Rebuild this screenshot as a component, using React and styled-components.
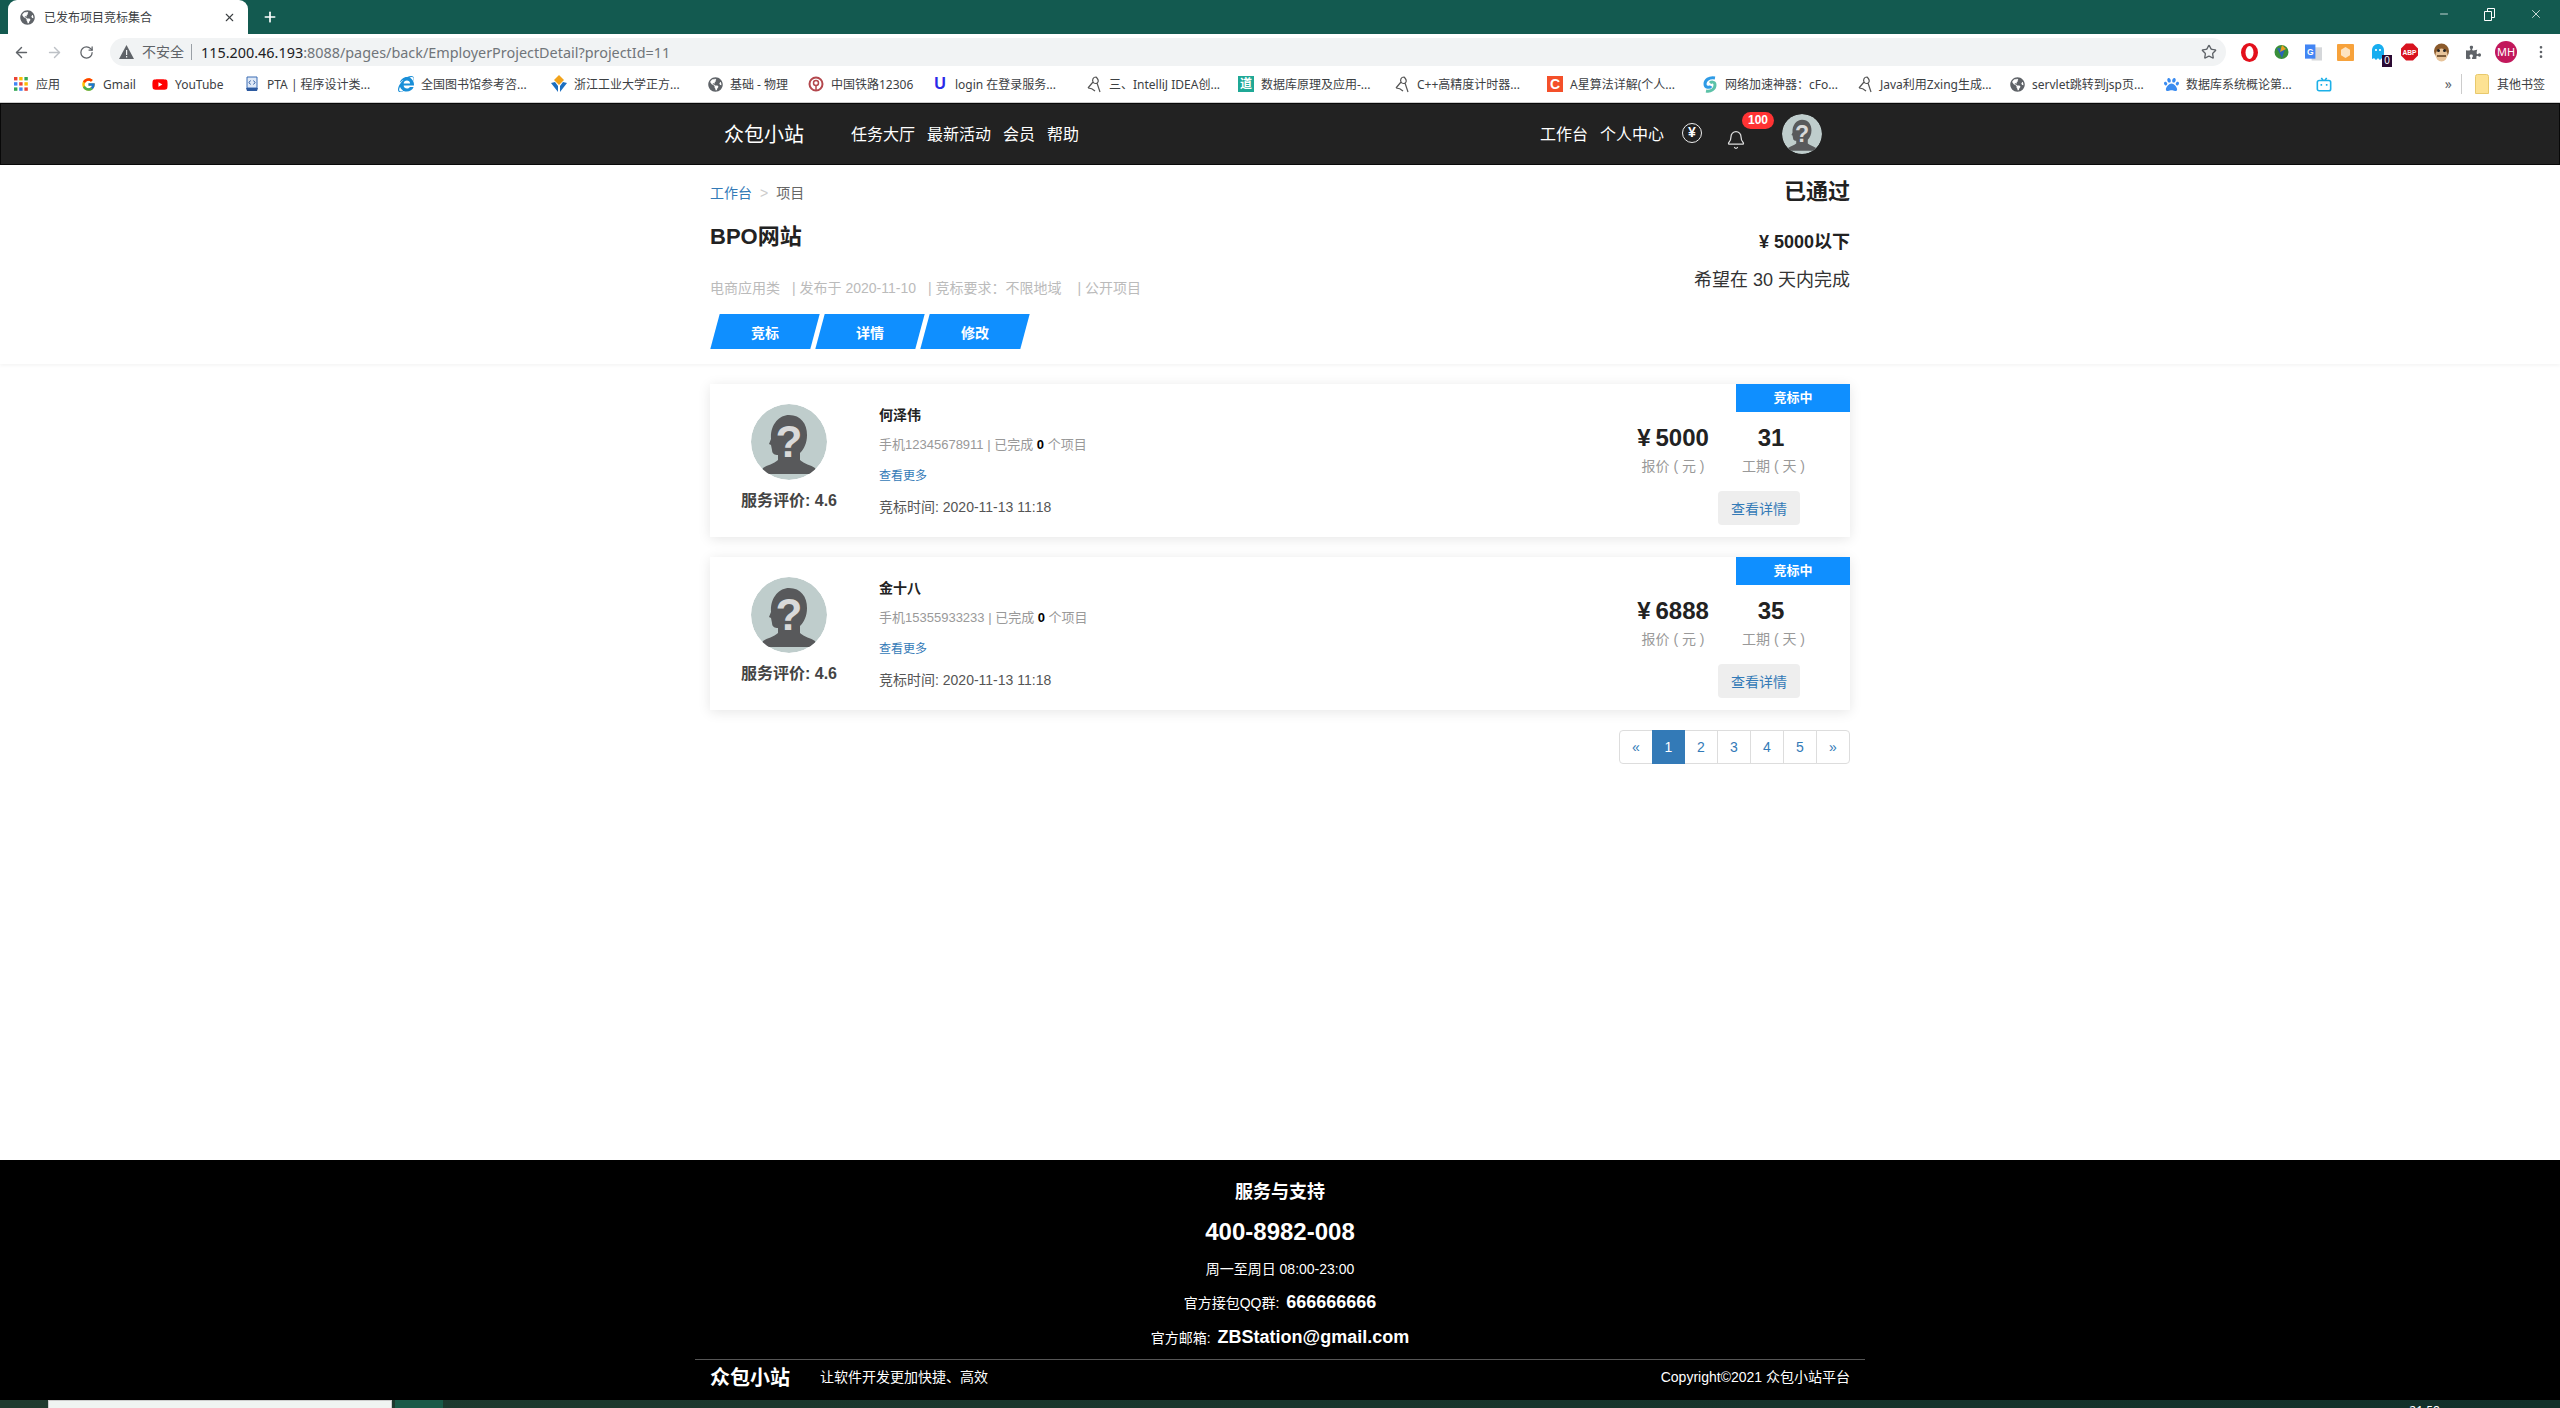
import React from 'react'
import styled, { createGlobalStyle } from 'styled-components'
import { ArrowLeft, ArrowRight, RotateCw, Star, EllipsisVertical, Bell, X, Plus, Minus } from 'lucide-react'
import { FaGlobeAmericas, FaPuzzlePiece, FaGhost, FaPaw, FaInternetExplorer, FaYoutube } from 'react-icons/fa'
import { FcGoogle } from 'react-icons/fc'

const SANS = '"Liberation Sans", "Noto Sans CJK SC", sans-serif'
const UI = '"Noto Sans", "Noto Sans CJK SC", sans-serif'

const GlobalStyle = createGlobalStyle`
  html, body { margin: 0; padding: 0; height: 100%; overflow: hidden; }
  body { font-family: ${SANS}; background: #fff; color: #333; }
  * { box-sizing: border-box; }
`

const Page = styled.div`
  display: flex;
  flex-direction: column;
  height: 100vh;
`

/* browser frame */
const TabStrip = styled.div`
  height: 34px;
  flex: none;
  background: #135a50;
  display: flex;
  align-items: flex-end;
  padding-left: 8px;
`
const Tab = styled.div`
  width: 240px;
  height: 34px;
  background: #fff;
  border-radius: 9px 9px 0 0;
  display: flex;
  align-items: center;
  padding: 0 12px;
  gap: 9px;
  font: 12px ${UI};
  color: #3c4043;
`
const TabTitle = styled.span`
  flex: 1;
`
const NewTab = styled.div`
  height: 34px;
  margin-left: 14px;
  display: flex;
  align-items: center;
  color: #fff;
`
const WindowControls = styled.div`
  margin-left: auto;
  height: 28px;
  align-self: flex-start;
  display: flex;
  align-items: center;
  gap: 34px;
  padding-right: 17px;
  color: #fff;
`
const Toolbar = styled.div`
  height: 32px;
  flex: none;
  background: #fff;
  display: flex;
  align-items: flex-end;
  padding-left: 13px;
  color: #5f6368;
`
const NavArrow = styled.div`
  width: ${p => p.$w}px;
  height: 28px;
  display: flex;
  align-items: center;
  color: ${p => (p.$off ? '#bdc1c6' : '#5f6368')};
`
const Omnibox = styled.div`
  width: 2116px;
  height: 28px;
  margin-left: 3px;
  background: #f1f3f4;
  border-radius: 14px;
  display: flex;
  align-items: center;
  padding: 0 9px;
  font: 14px ${UI};
  color: #5f6368;
`
const Insecure = styled.span`
  font-size: 14px;
  margin-left: 8px;
  padding-right: 7px;
  border-right: 1px solid #9aa0a6;
  line-height: 16px;
`
const Url = styled.span`
  margin-left: 9px;
  font-size: 14.4px;
  color: #70757a;
  b { font-weight: 400; color: #202124; }
`
const StarSlot = styled.span`
  margin-left: auto;
  margin-right: 0;
  display: flex;
`
const ExtensionRow = styled.div`
  display: flex;
  align-items: center;
  height: 28px;
  margin-left: 15px;
  gap: 15px;
`
const ExtSlot = styled.span`
  position: relative;
  width: 17px;
  height: 17px;
  display: flex;
  align-items: center;
  justify-content: center;
`
const ExtBadge = styled.span`
  position: absolute;
  right: -6px;
  bottom: -6px;
  width: 10px;
  height: 12px;
  background: #2a0a33;
  color: #fff;
  font: 10px/12px ${SANS};
  text-align: center;
`
const Profile = styled.span`
  width: 22px;
  height: 22px;
  margin-left: -2px;
  border-radius: 50%;
  background: #c2185b;
  color: #fff;
  font: 11px/22px ${UI};
  text-align: center;
`
const BookmarkBar = styled.div`
  height: 37px;
  flex: none;
  background: #fff;
  border-bottom: 1px solid #ccc;
  display: flex;
  align-items: center;
  padding-left: 13px;
  font: 12px ${UI};
  color: #3c4043;
`
const Bookmark = styled.div`
  width: ${p => p.$w}px;
  flex: none;
  display: flex;
  align-items: center;
  gap: 7px;
  white-space: nowrap;
`
const FavSlot = styled.span`
  width: 16px;
  height: 16px;
  flex: none;
  display: flex;
  align-items: center;
  justify-content: center;
`
const LetterIcon = styled.span`
  width: 16px;
  height: 16px;
  display: block;
  background: ${p => p.$bg || 'transparent'};
  color: ${p => p.$fg || '#fff'};
  font: bold ${p => p.$size || 13}px/16px ${SANS};
  text-align: center;
`
const MoreBookmarks = styled.div`
  margin-left: auto;
  display: flex;
  align-items: center;
  padding-right: 14px;
`
const Chevrons = styled.span`
  font: 14px ${UI};
  color: #5f6368;
  padding-right: 9px;
  margin-right: 12px;
  border-right: 1px solid #ccc;
  line-height: 20px;
`

/* site header */
const NavBar = styled.header`
  height: 62px;
  flex: none;
  background: #222;
  border: 1px solid #080808;
`
const NavInner = styled.div`
  width: 1170px;
  height: 100%;
  margin: 0 auto;
  padding: 0 43px 0 29px;
  display: flex;
  align-items: center;
  color: #fff;
`
const Brand = styled.span`
  font-size: 20px;
  margin: -2px 47px 0 0;
`
const NavLink = styled.span`
  font-size: 16px;
  margin: -2px 12px 0 0;
`
const NavRight = styled.div`
  margin-left: auto;
  display: flex;
  align-items: center;
`
const BellWrap = styled.span`
  position: relative;
  display: flex;
  margin: 12px 36px 0 24px;
  color: #ddd;
`
const BellBadge = styled.span`
  position: absolute;
  left: 16px;
  top: -18px;
  width: 32px;
  height: 17px;
  border-radius: 9px;
  background: #f33;
  color: #fff;
  font: bold 12px/17px ${SANS};
  text-align: center;
`
const YenIcon = styled.span`
  width: 20px;
  height: 20px;
  margin: -2px 0 0 6px;
  border: 1.5px solid #eee;
  border-radius: 50%;
  font: bold 14px/17px ${SANS};
  text-align: center;
  color: #fff;
`

/* project summary */
const Main = styled.main`
  flex: 1;
  background: #fff;
`
const Summary = styled.section`
  background: #fff;
  height: 199px;
  box-shadow: 0 2px 3px rgba(0, 0, 0, 0.04);
`
const Wrap = styled.div`
  width: 1140px;
  margin: 0 auto;
`
const SummaryInner = styled(Wrap)`
  display: flex;
  justify-content: space-between;
  padding-top: 12px;
`
const SummaryLeft = styled.div`
  padding-top: 6px;
`
const Crumbs = styled.div`
  font-size: 14px;
  line-height: 20px;
  color: #666;
  a { color: #337ab7; }
  i { font-style: normal; color: #ccc; padding: 0 8px; }
`
const Title = styled.h1`
  margin: 19px 0 0;
  font-size: 22px;
  line-height: 30px;
  font-weight: 700;
  color: #222;
`
const MetaRow = styled.div`
  margin-top: 26px;
  font-size: 14px;
  line-height: 20px;
  color: #bbb;
`
const MetaItem = styled.span`
  white-space: pre;
  margin-right: 12px;
`
const ActionRow = styled.div`
  margin-top: 16px;
  display: flex;
  gap: 5px;
  padding-left: 5px;
`
const SkewButton = styled.button`
  position: relative;
  width: 100px;
  height: 35px;
  padding: 0;
  border: 0;
  background: transparent;
  color: #fff;
  font: bold 14px ${SANS};
  z-index: 0;
  &::before {
    content: '';
    position: absolute;
    inset: 0;
    background: #0f8fff;
    transform: skewX(-15deg);
    z-index: -1;
  }
`
const SummaryRight = styled.div`
  text-align: right;
  color: #222;
`
const Status = styled.div`
  font-size: 22px;
  line-height: 30px;
  font-weight: 700;
`
const Budget = styled.div`
  margin-top: 23px;
  font-size: 18px;
  line-height: 24px;
  font-weight: 700;
`
const Deadline = styled.div`
  margin-top: 14px;
  font-size: 18px;
  line-height: 24px;
  color: #333;
`

/* bids */
const BidList = styled(Wrap)`
  padding-top: 20px;
  display: flex;
  flex-direction: column;
  gap: 20px;
`
const BidCard = styled.article`
  position: relative;
  height: 153px;
  background: #fff;
  box-shadow: 0 2px 12px rgba(0, 0, 0, 0.1);
  display: flex;
`
const Ribbon = styled.div`
  position: absolute;
  top: 0;
  right: 0;
  width: 114px;
  height: 28px;
  background: #0f8fff;
  color: #fff;
  font-size: 13px;
  line-height: 28px;
  font-weight: 700;
  text-align: center;
`
const Bidder = styled.div`
  width: 158px;
  padding-top: 20px;
  display: flex;
  flex-direction: column;
  align-items: center;
`
const Rating = styled.div`
  margin-top: 9px;
  font-size: 16px;
  line-height: 24px;
  font-weight: 700;
  color: #444;
  white-space: nowrap;
`
const BidInfo = styled.div`
  margin-left: 11px;
  padding-top: 16px;
  flex: 1;
`
const BidName = styled.div`
  font-size: 14px;
  line-height: 30px;
  font-weight: 700;
  color: #222;
`
const BidContact = styled.div`
  font-size: 13px;
  line-height: 30px;
  color: #999;
  b { color: #000; }
`
const MoreLink = styled.a`
  display: block;
  padding-top: 1px;
  font-size: 12px;
  line-height: 30px;
  color: #337ab7;
`
const BidTime = styled.div`
  font-size: 14px;
  line-height: 32px;
  color: #555;
`
const BidSide = styled.div`
  margin-right: 50px;
  padding-top: 40px;
  display: flex;
  flex-direction: column;
  align-items: flex-end;
`
const StatRow = styled.div`
  display: flex;
  gap: 32px;
`
const Stat = styled.div`
  width: ${p => p.$w}px;
  text-align: center;
  white-space: nowrap;
`
const StatValue = styled.div`
  font-size: 24px;
  line-height: 28px;
  font-weight: 700;
  color: #222;
`
const Currency = styled.span`
  margin-right: 5px;
`
const StatLabel = styled.div`
  margin-top: 4px;
  font-size: 14px;
  line-height: 20px;
  color: #999;
`
const DetailButton = styled.button`
  margin-top: 15px;
  width: 82px;
  height: 34px;
  border: 0;
  border-radius: 4px;
  background: #eee;
  color: #337ab7;
  font: 14px ${SANS};
  padding: 0 0 1px;
`
const Pager = styled.ul`
  list-style: none;
  margin: 0;
  padding: 0;
  align-self: flex-end;
  display: flex;
`
const PageItem = styled.li`
  width: ${p => p.$w}px;
  height: 34px;
  margin-left: -1px;
  border: 1px solid ${p => (p.$active ? '#337ab7' : '#ddd')};
  background: ${p => (p.$active ? '#337ab7' : '#fff')};
  color: ${p => (p.$active ? '#fff' : '#337ab7')};
  font-size: 14px;
  line-height: 32px;
  text-align: center;
  position: relative;
  z-index: ${p => (p.$active ? 1 : 0)};
  &:first-child { border-radius: 4px 0 0 4px; margin-left: 0; }
  &:last-child { border-radius: 0 4px 4px 0; }
`

/* footer */
const Footer = styled.footer`
  height: 240px;
  flex: none;
  background: #000;
  color: #fff;
  padding-top: 20px;
`
const FootCenter = styled.div`
  text-align: center;
  line-height: 24px;
  font-size: 14px;
`
const FootHeading = styled.div`
  font-size: 18px;
  line-height: 24px;
  font-weight: 700;
`
const FootPhone = styled.div`
  margin-top: 13px;
  font-size: 24px;
  line-height: 30px;
  font-weight: 700;
`
const FootLine = styled.div`
  margin-top: ${p => p.$mt}px;
  height: ${p => p.$lh}px;
  line-height: ${p => p.$lh}px;
  b { font-size: ${p => p.$big}px; margin-left: 3px; }
`
const FootBar = styled.div`
  width: 1170px;
  height: 33px;
  margin: 9px auto 0;
  padding: 0 15px;
  border-top: 1px solid #555;
  display: flex;
  align-items: center;
  font-size: 14px;
`
const FootBrand = styled.span`
  font-size: 20px;
  font-weight: 700;
  margin-right: 30px;
`
const Copyright = styled.span`
  margin-left: auto;
`

/* os taskbar, cut off by the bottom of the capture */
const TaskBar = styled.div`
  height: 8px;
  flex: none;
  background: linear-gradient(90deg, #1f3a2e, #12302a);
  display: flex;
  overflow: hidden;
  padding-left: 48px;
`
const TaskSearch = styled.div`
  width: 344px;
  background: #f0f4f2;
  border: 1px solid #ccc;
  border-bottom: 0;
`
const TaskActive = styled.div`
  width: 48px;
  margin-left: 3px;
  background: #1a5a48;
`
const TaskClock = styled.div`
  margin-left: auto;
  margin-right: 120px;
  padding-top: 4px;
  font: 12px/14px ${UI};
  color: #fff;
`

const AppsIcon = () => (
  <svg width="14" height="14" viewBox="0 0 14 14">
    {['#ea4335', '#fbbc04', '#34a853', '#4285f4', '#ea4335', '#fbbc04', '#34a853', '#4285f4', '#ea4335'].map((c, i) => (
      <rect key={i} x={(i % 3) * 5.2} y={Math.floor(i / 3) * 5.2} width="3.4" height="3.4" fill={c} />
    ))}
  </svg>
)
const PtaIcon = () => (
  <svg width="16" height="16" viewBox="0 0 16 16">
    <path d="M3 1h10v11H3z" fill="#dfe9f7" stroke="#3b6cb4" />
    <path d="M2 12h12l-1 3H3z" fill="#2d5aa0" />
    <path d="M6.5 4.5 5 6.5l1.500 2M9.500 4.500 11 6.500l-1.500 2" fill="none" stroke="#2d5aa0" />
  </svg>
)
const ZjutIcon = () => (
  <svg width="16" height="18" viewBox="0 0 16 18">
    <path d="M8 0l5 5-5 5-5-5z" fill="#f2a31b" />
    <path d="M0 8l4-1 3 4v6zM16 8l-4-1-3 4v6z" fill="#1d6fc0" />
  </svg>
)
const RailIcon = () => (
  <svg width="16" height="16" viewBox="0 0 16 16">
    <circle cx="8" cy="8" r="6.500" fill="none" stroke="#b3474d" strokeWidth="2" />
    <circle cx="8" cy="7" r="2.500" fill="none" stroke="#b3474d" strokeWidth="1.500" />
    <path d="M8 10v4" stroke="#b3474d" strokeWidth="1.500" />
  </svg>
)
const QuillIcon = () => (
  <svg width="16" height="17" viewBox="0 0 16 17" fill="none" stroke="#555" strokeWidth="1.200">
    <path d="M10 1C7 1 6 4 7 6s4 2 5 0-1-4-2-5zM7 6 2 12M11 7l3 9M2 12c3 0 5 1 7 3" />
  </svg>
)
const SpiralIcon = () => (
  <svg width="14" height="17" viewBox="0 0 14 17" fill="none" strokeWidth="3">
    <path d="M12 2C6 1 2 4 2 8s5 4 6 2" stroke="#2f9be6" />
    <path d="M3 15c5 1 9-2 9-6S8 6 7 7" stroke="#5cc2a8" />
  </svg>
)
const BiliIcon = () => (
  <svg width="18" height="17" viewBox="0 0 18 17" fill="none" stroke="#1cb0e8" strokeWidth="1.800">
    <rect x="1.500" y="4" width="15" height="11.500" rx="2" />
    <path d="M6 1l2 3M12 1l-2 3M6 8v2M12 8v2" />
  </svg>
)
const FolderIcon = () => (
  <svg width="14" height="20" viewBox="0 0 14 20">
    <path d="M.5 2.500a2 2 0 0 1 2-2h9a2 2 0 0 1 2 2v17H.5z" fill="#fde293" stroke="#e8c96c" />
  </svg>
)
const RestoreIcon = () => (
  <svg width="11" height="13" viewBox="0 0 11 13" fill="none" stroke="#fff">
    <path d="M3.500 3V.5h7v9H8" />
    <path d="M.5 3.500h7v9h-7z" />
  </svg>
)
const StopIcon = () => (
  <svg width="17" height="19" viewBox="0 0 17 19">
    <ellipse cx="8.500" cy="9.500" rx="8.500" ry="9.500" fill="#e3101c" />
    <ellipse cx="8.500" cy="9.500" rx="4" ry="6.500" fill="#fff" />
  </svg>
)
const IdmIcon = () => (
  <svg width="17" height="17" viewBox="0 0 17 17">
    <circle cx="8.500" cy="8" r="7" fill="#3a8f3a" />
    <path d="M4 4l8 1-3 9z" fill="#2b63b8" />
    <path d="M9 1l4 4-6 3z" fill="#e8a020" />
  </svg>
)
const TranslateIcon = () => (
  <svg width="18" height="17" viewBox="0 0 18 17">
    <rect x="7" y="3" width="11" height="14" fill="#d5d7da" />
    <rect width="11" height="15" fill="#4285f4" />
    <text x="5.500" y="11" textAnchor="middle" fontSize="9" fontWeight="700" fontFamily="Liberation Sans" fill="#fff">G</text>
  </svg>
)
const HexIcon = () => (
  <svg width="17" height="17" viewBox="0 0 17 17">
    <rect width="17" height="17" rx="1" fill="#f7a23b" />
    <path d="M8.500 3l4.500 2.700v5.600L8.500 14 4 11.300V5.700z" fill="#fde3c0" />
  </svg>
)
const AbpIcon = () => (
  <svg width="18" height="18" viewBox="0 0 18 18">
    <path d="M5.300 0h7.400L18 5.300v7.400L12.700 18H5.300L0 12.700V5.300z" fill="#d8131f" />
    <text x="9" y="12" textAnchor="middle" fontSize="7" fontWeight="700" fontFamily="Liberation Sans" fill="#fff">ABP</text>
  </svg>
)
const MonkeyIcon = () => (
  <svg width="17" height="19" viewBox="0 0 17 19">
    <circle cx="8.500" cy="8" r="7.500" fill="#8b5a2b" />
    <ellipse cx="8.500" cy="12" rx="6" ry="6.500" fill="#e8c49a" />
    <circle cx="5.500" cy="7.500" r="1.500" fill="#222" />
    <circle cx="11.500" cy="7.500" r="1.500" fill="#222" />
    <path d="M4 13h9" stroke="#5a3a1a" strokeWidth="1.500" />
  </svg>
)

const Silhouette = ({ size }) => (
  <svg width={size} height={size} viewBox="0 0 76 76" style={{ borderRadius: '50%', flex: 'none' }}>
    <circle cx="38" cy="38" r="38" fill="#bfcdcc" />
    <path
      d="M38 11c12 0 18 9 18 20 0 8-3 14-7 18v7c4 4 11 5 15 8l2 6H10l2-6c4-3 11-4 15-8v-5c-3 0-6-1-6-5l-1-5-2-1 2-5c-1-14 8-24 18-24z"
      fill="#58595b"
    />
    <text x="38" y="53" textAnchor="middle" fontSize="44" fontWeight="700" fontFamily="Liberation Sans" fill="#d9d9d9">?</text>
  </svg>
)

const bookmarks = [
  { w: 67, icon: <AppsIcon />, label: '应用' },
  { w: 72, icon: <FcGoogle size={15} />, label: 'Gmail' },
  { w: 92, icon: <FaYoutube size={17} color="#f00" />, label: 'YouTube' },
  { w: 154, icon: <PtaIcon />, label: 'PTA | 程序设计类...' },
  { w: 153, icon: <FaInternetExplorer size={16} color="#1a8fd8" />, label: '全国图书馆参考咨...' },
  { w: 156, icon: <ZjutIcon />, label: '浙江工业大学正方...' },
  { w: 101, icon: <FaGlobeAmericas size={15} color="#5f6368" />, label: '基础 - 物理' },
  { w: 124, icon: <RailIcon />, label: '中国铁路12306' },
  { w: 154, icon: <LetterIcon $fg="#2a2ae8" $size={16}>U</LetterIcon>, label: 'login 在登录服务...' },
  { w: 152, icon: <QuillIcon />, label: '三、IntelliJ IDEA创...' },
  { w: 156, icon: <LetterIcon $bg="#1fa896" $size={12}>道</LetterIcon>, label: '数据库原理及应用-...' },
  { w: 153, icon: <QuillIcon />, label: 'C++高精度计时器...' },
  { w: 155, icon: <LetterIcon $bg="#f4502a" $size={14}>C</LetterIcon>, label: 'A星算法详解(个人...' },
  { w: 155, icon: <SpiralIcon />, label: '网络加速神器：cFo...' },
  { w: 152, icon: <QuillIcon />, label: 'Java利用Zxing生成...' },
  { w: 154, icon: <FaGlobeAmericas size={15} color="#5f6368" />, label: 'servlet跳转到jsp页...' },
  { w: 153, icon: <FaPaw size={15} color="#3b8cf0" />, label: '数据库系统概论第...' },
  { w: 20, icon: <BiliIcon />, label: '' },
]

const bids = [
  { name: '何泽伟', phone: '12345678911', price: '5000', days: 31 },
  { name: '金十八', phone: '15355933233', price: '6888', days: 35 },
]

const pages = ['«', '1', '2', '3', '4', '5', '»']

export default function App() {
  return (
    <Page>
      <GlobalStyle />
      <TabStrip>
        <Tab>
          <FaGlobeAmericas size={15} color="#5f6368" />
          <TabTitle>已发布项目竞标集合</TabTitle>
          <X size={13} strokeWidth={2} />
        </Tab>
        <NewTab><Plus size={16} strokeWidth={2.5} /></NewTab>
        <WindowControls>
          <Minus size={12} strokeWidth={1.5} />
          <RestoreIcon />
          <X size={14} strokeWidth={1.3} />
        </WindowControls>
      </TabStrip>
      <Toolbar>
        <NavArrow $w={33}><ArrowLeft size={17} /></NavArrow>
        <NavArrow $w={33} $off><ArrowRight size={17} /></NavArrow>
        <NavArrow $w={28}><RotateCw size={15} /></NavArrow>
        <Omnibox>
          <svg width="15" height="14" viewBox="0 0 15 14"><path d="M7.500 0 15 14H0z" fill="#5f6368" /><path d="M7 5h1.200v5H7zM7 11h1.200v1.500H7z" fill="#f1f3f4" /></svg>
          <Insecure>不安全</Insecure>
          <Url><b>115.200.46.193</b>:8088/pages/back/EmployerProjectDetail?projectId=11</Url>
          <StarSlot><Star size={16} /></StarSlot>
        </Omnibox>
        <ExtensionRow>
          <ExtSlot><StopIcon /></ExtSlot>
          <ExtSlot><IdmIcon /></ExtSlot>
          <ExtSlot><TranslateIcon /></ExtSlot>
          <ExtSlot><HexIcon /></ExtSlot>
          <ExtSlot><FaGhost size={16} color="#18aef0" /><ExtBadge>0</ExtBadge></ExtSlot>
          <ExtSlot><AbpIcon /></ExtSlot>
          <ExtSlot><MonkeyIcon /></ExtSlot>
          <ExtSlot><FaPuzzlePiece size={15} color="#5f6368" /></ExtSlot>
          <Profile>MH</Profile>
          <ExtSlot><EllipsisVertical size={16} /></ExtSlot>
        </ExtensionRow>
      </Toolbar>
      <BookmarkBar>
        {bookmarks.map((b, i) => (
          <Bookmark key={i} $w={b.w}>
            <FavSlot>{b.icon}</FavSlot>
            {b.label && <span>{b.label}</span>}
          </Bookmark>
        ))}
        <MoreBookmarks>
          <Chevrons>»</Chevrons>
          <Bookmark $w={72}><FavSlot><FolderIcon /></FavSlot><span>其他书签</span></Bookmark>
        </MoreBookmarks>
      </BookmarkBar>

      <NavBar>
        <NavInner>
          <Brand>众包小站</Brand>
          <NavLink>任务大厅</NavLink>
          <NavLink>最新活动</NavLink>
          <NavLink>会员</NavLink>
          <NavLink>帮助</NavLink>
          <NavRight>
            <NavLink>工作台</NavLink>
            <NavLink>个人中心</NavLink>
            <YenIcon>¥</YenIcon>
            <BellWrap>
              <Bell size={20} strokeWidth={1.5} />
              <BellBadge>100</BellBadge>
            </BellWrap>
            <Silhouette size={40} />
          </NavRight>
        </NavInner>
      </NavBar>

      <Main>
        <Summary>
          <SummaryInner>
            <SummaryLeft>
              <Crumbs><a>工作台</a><i>&gt;</i>项目</Crumbs>
              <Title>BPO网站</Title>
              <MetaRow>
                <MetaItem>电商应用类</MetaItem>
                <MetaItem>| 发布于 2020-11-10</MetaItem>
                <MetaItem>| 竞标要求：不限地域 </MetaItem>
                <MetaItem>| 公开项目</MetaItem>
              </MetaRow>
              <ActionRow>
                <SkewButton>竞标</SkewButton>
                <SkewButton>详情</SkewButton>
                <SkewButton>修改</SkewButton>
              </ActionRow>
            </SummaryLeft>
            <SummaryRight>
              <Status>已通过</Status>
              <Budget>¥ 5000以下</Budget>
              <Deadline>希望在 30 天内完成</Deadline>
            </SummaryRight>
          </SummaryInner>
        </Summary>

        <BidList>
          {bids.map(bid => (
            <BidCard key={bid.name}>
              <Ribbon>竞标中</Ribbon>
              <Bidder>
                <Silhouette size={76} />
                <Rating>服务评价: 4.6</Rating>
              </Bidder>
              <BidInfo>
                <BidName>{bid.name}</BidName>
                <BidContact>手机{bid.phone} | 已完成 <b>0</b> 个项目</BidContact>
                <MoreLink>查看更多</MoreLink>
                <BidTime>竞标时间: 2020-11-13 11:18</BidTime>
              </BidInfo>
              <BidSide>
                <StatRow>
                  <Stat $w={74}>
                    <StatValue><Currency>¥</Currency>{bid.price}</StatValue>
                    <StatLabel>报价 ( 元 )</StatLabel>
                  </Stat>
                  <Stat $w={58}>
                    <StatValue>{bid.days}</StatValue>
                    <StatLabel>工期 ( 天 )</StatLabel>
                  </Stat>
                </StatRow>
                <DetailButton>查看详情</DetailButton>
              </BidSide>
            </BidCard>
          ))}
          <Pager>
            {pages.map(p => (
              <PageItem key={p} $active={p === '1'} $w={p === '1' ? 33 : 34}>{p}</PageItem>
            ))}
          </Pager>
        </BidList>
      </Main>

      <Footer>
        <FootCenter>
          <FootHeading>服务与支持</FootHeading>
          <FootPhone>400-8982-008</FootPhone>
          <FootLine $mt={12} $lh={20}>周一至周日 08:00-23:00</FootLine>
          <FootLine $mt={11} $lh={24} $big={18}>官方接包QQ群: <b>666666666</b></FootLine>
          <FootLine $mt={10} $lh={26} $big={18}>官方邮箱: <b>ZBStation@gmail.com</b></FootLine>
        </FootCenter>
        <FootBar>
          <FootBrand>众包小站</FootBrand>
          <span>让软件开发更加快捷、高效</span>
          <Copyright>Copyright©2021 众包小站平台</Copyright>
        </FootBar>
      </Footer>
      <TaskBar>
        <TaskSearch />
        <TaskActive />
        <TaskClock>21:58</TaskClock>
      </TaskBar>
    </Page>
  )
}
